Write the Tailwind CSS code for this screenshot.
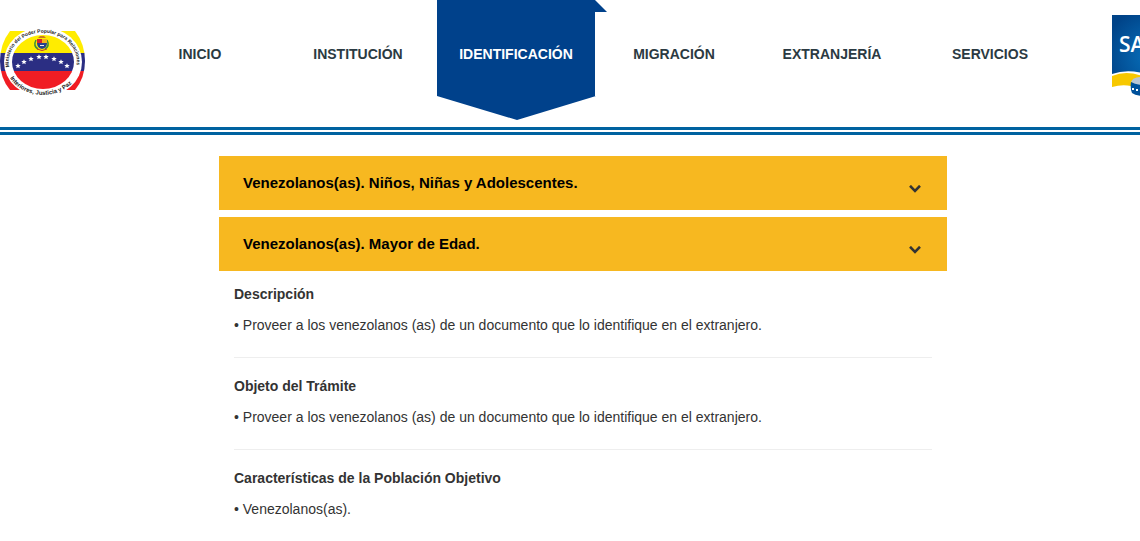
<!DOCTYPE html>
<html lang="es">
<head>
    <meta charset="UTF-8">
    <meta name="viewport" content="width=device-width, initial-scale=1.0">
    <title>SAIME - Identificación</title>
    <script src="https://cdn.jsdelivr.net/npm/@tailwindcss/browser@4"></script>
</head>
<body class="bg-white font-['Liberation_Sans',Arial,sans-serif] text-sm text-[#333333] overflow-x-hidden">
    <header class="flex h-[127px]">
        <!-- Ministry seal -->
        <a href="#" class="w-[121px] shrink-0 pt-5" aria-label="Ministerio">
            <svg class="w-[90px] h-20" viewBox="0 20 90 80">
                <defs>
                    <clipPath id="sides"><path d="M10 31H75Q85 44 85 61T75 90H10Q0 78 0 61T10 31Z"/></clipPath>
                    <clipPath id="disc"><ellipse cx="43" cy="62" rx="31" ry="27"/></clipPath>
                    <path id="ringTop" d="M9.400 67A34 29 0 1 1 75 71"/>
                    <path id="ringBottom" d="M10 78A38 33 0 0 0 78 75"/>
                    <path id="star" d="M0-2.800L.8-.9 2.700-.9 1.200.4 1.800 2.300 0 1.200-1.800 2.300-1.200.4-2.700-.9-.8-.9Z"/>
                </defs>
                <g clip-path="url(#sides)">
                    <path fill="#ffec00" d="M0 30h86v23H0z"/>
                    <path fill="#2b2e83" d="M0 53h86v18H0z"/>
                    <path fill="#f01d24" d="M0 71h86v20H0z"/>
                </g>
                <ellipse cx="43" cy="62" rx="39" ry="35" fill="#fff"/>
                <g clip-path="url(#disc)">
                    <path fill="#ffec00" d="M10 33h66v20H10z"/>
                    <path fill="#2b2e83" d="M10 53h66v18H10z"/>
                    <path fill="#f01d24" d="M10 71h66v20H10z"/>
                </g>
                <g fill="#fff">
                    <use href="#star" x="18" y="66"/>
                    <use href="#star" x="24" y="62"/>
                    <use href="#star" x="31" y="59"/>
                    <use href="#star" x="39" y="57"/>
                    <use href="#star" x="46" y="57"/>
                    <use href="#star" x="54" y="59"/>
                    <use href="#star" x="61" y="62"/>
                    <use href="#star" x="67" y="66"/>
                </g>
                <!-- coat of arms -->
                <path fill="none" stroke="#3d8b40" stroke-width="1.500" d="M36 40q-3 6 2 9M47 40q3 6-2 9"/>
                <path fill="#d8232a" d="M37 39h5v4h-5z"/>
                <path fill="#f4b41a" d="M42 39h5v4h-5z"/>
                <path fill="#27408b" d="M37 43h10q0 5-5 6-5-1-5-6z"/>
                <path fill="#f0f0f0" d="M40 45h4v1h-4z"/>
                <path fill="#c77f1e" d="M38 38l2-2h4l2 2z"/>
                <path fill="none" stroke="#c33d2c" d="M37 49q5 3 10 0"/>
                <g fill="#222" font-weight="bold">
                    <text font-size="5"><textPath href="#ringTop">Ministerio del Poder Popular para Relaciones</textPath></text>
                    <text font-size="6"><textPath href="#ringBottom">Interiores, Justicia y Paz</textPath></text>
                </g>
            </svg>
        </a>

        <nav class="grid grid-cols-6 flex-1 font-bold leading-5 text-center text-[#2b3a42]">
            <a href="#" class="pt-11">INICIO</a>
            <a href="#" class="pt-11">INSTITUCIÓN</a>
            <a href="#" class="relative h-24 pt-11 bg-[#00418b] text-white">
                IDENTIFICACIÓN
                <svg class="absolute left-full top-0 w-3 h-3" viewBox="0 0 12 12"><path fill="#00418b" d="M0 0l12 12H0z"/></svg>
                <svg class="absolute left-0 top-full w-[160px] h-6" viewBox="0 0 160 24"><path fill="#00418b" d="M0 0h159L80 24z"/></svg>
            </a>
            <a href="#" class="pt-11">MIGRACIÓN</a>
            <a href="#" class="pt-11">EXTRANJERÍA</a>
            <a href="#" class="pt-11">SERVICIOS</a>
        </nav>

        <!-- SAIME logo, runs past the right edge -->
        <a href="#" class="w-[71px] shrink-0 pl-[43px] pt-[15px] overflow-hidden" aria-label="SAIME">
            <svg class="w-20 h-[82px] max-w-none" viewBox="0 0 80 82">
                <defs>
                    <radialGradient id="sky" gradientUnits="userSpaceOnUse" cx="40" cy="40" r="48">
                        <stop offset="0" stop-color="#0872bd"/>
                        <stop offset="1" stop-color="#004388"/>
                    </radialGradient>
                </defs>
                <path fill="url(#sky)" d="M0 0h80v62H0z"/>
                <path fill="#fff" d="M0 59Q14 54 30 58H80V82H0z"/>
                <path fill="#f7c800" d="M0 61Q14 55 30 61L32 66Q24 65 19 71 10 69 0 72z"/>
                <path fill="#b9c6d4" d="M19 67Q21 61 34 62V70Q24 71 19 67z"/>
                <path fill="#00519b" d="M19 67Q26 71 40 70V81Q25 82 20 78 18 73 19 67z"/>
                <path fill="#fff" d="M20 73h2v2h-2zM24 74h2v2h-2zM28 74h2v2h-2z"/>
                <text x="7" y="37" fill="#fff" font-family="Open Sans, sans-serif" font-size="21" font-weight="600">SAIME</text>
            </svg>
        </a>
    </header>
    <div class="h-2 border-y-3 border-[#0062a0]"></div>

    <main class="ml-[219px] mr-[193px] pt-[21px] leading-5">
        <button type="button" class="flex w-full items-end justify-between bg-[#f7b820] pt-[17px] pb-[17px] pl-6 pr-[26px] text-left text-[15px] font-bold text-black">
            Venezolanos(as). Niños, Niñas y Adolescentes.
            <svg class="w-3 h-2" viewBox="0 0 12 8"><path fill="none" stroke="#333" stroke-width="2.600" d="M1 .8l5 5 5-5"/></svg>
        </button>
        <button type="button" class="mt-[7px] flex w-full items-end justify-between bg-[#f7b820] pt-[17px] pb-[17px] pl-6 pr-[26px] text-left text-[15px] font-bold text-black" aria-expanded="true">
            Venezolanos(as). Mayor de Edad.
            <svg class="w-3 h-2" viewBox="0 0 12 8"><path fill="none" stroke="#333" stroke-width="2.600" d="M1 .8l5 5 5-5"/></svg>
        </button>

        <div class="px-[15px] pt-[13px]">
            <h2 class="font-bold">Descripción</h2>
            <p class="mt-[11px]">• Proveer a los venezolanos (as) de un documento que lo identifique en el extranjero.</p>
            <hr class="mt-[22px] mb-[18px] border-[#eeeeee]">
            <h2 class="font-bold">Objeto del Trámite</h2>
            <p class="mt-[11px]">• Proveer a los venezolanos (as) de un documento que lo identifique en el extranjero.</p>
            <hr class="mt-[22px] mb-[18px] border-[#eeeeee]">
            <h2 class="font-bold">Características de la Población Objetivo</h2>
            <p class="mt-[11px]">• Venezolanos(as).</p>
        </div>
    </main>
</body>
</html>
